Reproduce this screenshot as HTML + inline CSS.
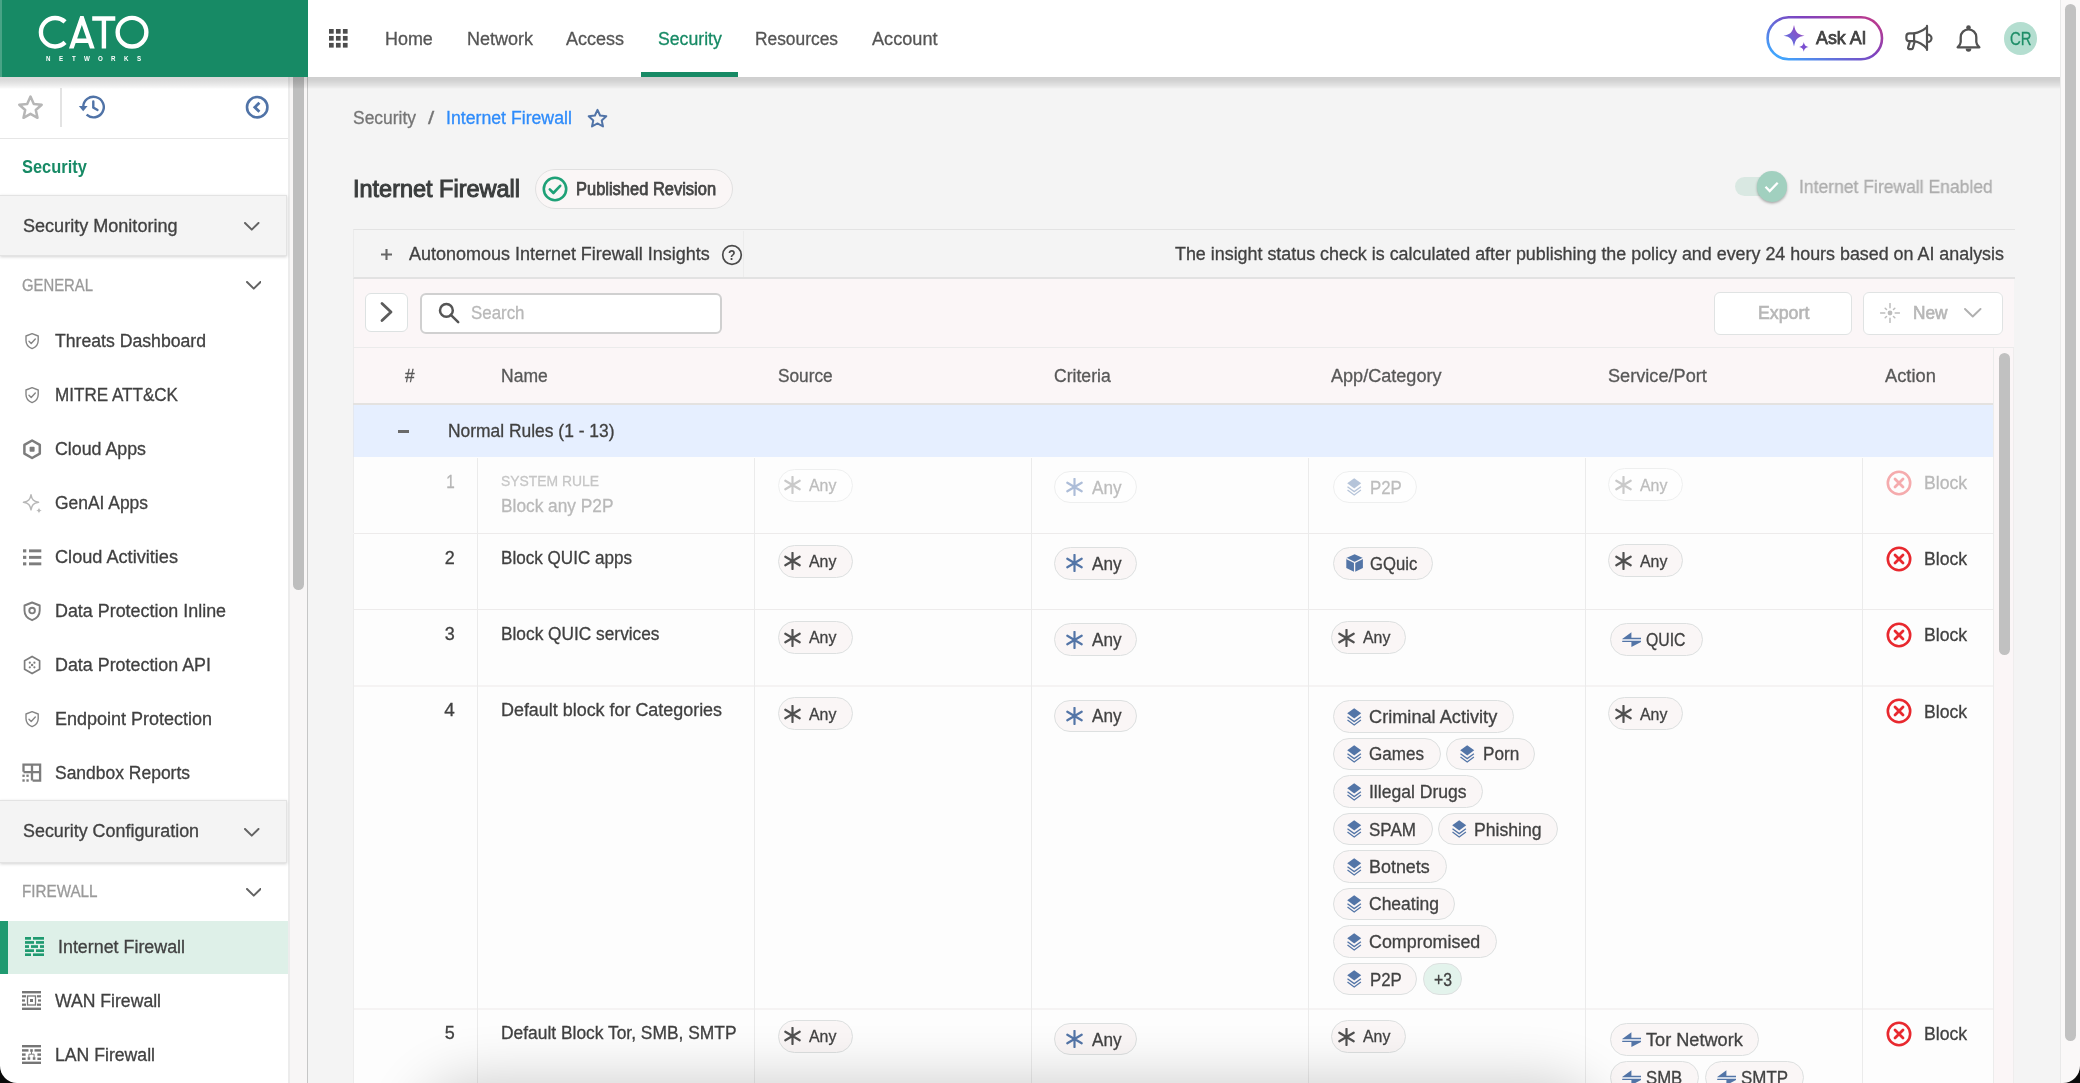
<!DOCTYPE html>
<html><head><meta charset="utf-8"><title>Internet Firewall</title>
<style>
html,body{margin:0;padding:0;}
body{width:2080px;height:1083px;overflow:hidden;position:relative;background:#f4f4f4;font-family:"Liberation Sans",sans-serif;}
#app{position:absolute;left:0;top:0;width:2080px;height:1083px;overflow:hidden;will-change:transform;}
.b{position:absolute;box-sizing:border-box;display:block;}
.t{position:absolute;white-space:nowrap;line-height:1;transform-origin:0 50%;font-family:"Liberation Sans",sans-serif;}
</style></head><body><div id="app">
<div class="b" style="left:0px;top:77px;width:288px;height:1006px;background:#fff;"></div>
<div class="b" style="left:288px;top:77px;width:20px;height:1006px;background:#f8f6f6;border-left:2px solid #ececec;border-right:1px solid #c6c6c6;"></div>
<div class="b" style="left:293px;top:60px;width:11px;height:530px;background:#bebebe;border-radius:6px;"></div>
<svg class="b" style="left:17px;top:94px;" width="27" height="27" viewBox="0 0 27 27"><path d="M13.5 2.6l3.3 7.3 7.9.8-5.9 5.3 1.7 7.8-7-4-7 4 1.7-7.8-5.9-5.3 7.9-.8z" fill="none" stroke="#b6b6b6" stroke-width="2.500" stroke-linejoin="round"/></svg>
<div class="b" style="left:60px;top:88px;width:2px;height:39px;background:#e3e3e3;"></div>
<svg class="b" style="left:77px;top:94.3px;" width="28" height="26" viewBox="0 0 28 26"><g fill="none" stroke="#5073a7" stroke-width="2.400"><path d="M6.200 13a10.300 10.300 0 1 1 3.400 7.700"/><path d="M16.3 7.5v6l4.2 2.5" stroke-linecap="round"/></g><path d="M1.800 12h8.800l-4.400 5.200z" fill="#5073a7"/></svg>
<svg class="b" style="left:245px;top:95px;" width="25" height="25" viewBox="0 0 25 25"><g fill="none" stroke="#5073a7" stroke-width="2.600"><circle cx="12.200" cy="12.200" r="10.200"/><path d="M14.400 7.800L9.800 12.300l4.600 4.500" stroke-width="2.800" stroke-linejoin="miter"/></g></svg>
<div class="b" style="left:0px;top:137.5px;width:288px;height:1.5px;background:#e6e6e6;"></div>
<span class="t" style="left:22.40px;top:159.00px;font-size:17.6px;color:#178a65;transform:scaleX(0.9334);font-weight:700;">Security</span>
<div class="b" style="left:0px;top:194.5px;width:287px;height:61px;background:#f4f4f4;border:1px solid #e3e3e3;border-left:none;box-shadow:0 1px 3px rgba(0,0,0,.18);"></div>
<span class="t" style="left:23.20px;top:218.00px;font-size:17.6px;color:#414141;transform:scaleX(1.0262);-webkit-text-stroke:0.3px #414141;">Security Monitoring</span>
<svg class="b" style="left:244.3px;top:221.8px;" width="15.5" height="9.6" viewBox="0 0 15.5 9.6"><path d="M1 1L7.75 7.6L14.5 1" fill="none" stroke="#636363" stroke-width="2" stroke-linecap="round" stroke-linejoin="round"/></svg>
<span class="t" style="left:22.40px;top:277.00px;font-size:16.25px;color:#9a9a9a;transform:scaleX(0.9141);-webkit-text-stroke:0.3px #9a9a9a;">GENERAL</span>
<svg class="b" style="left:245.6px;top:281.3px;" width="15.5" height="9.6" viewBox="0 0 15.5 9.6"><path d="M1 1L7.75 7.6L14.5 1" fill="none" stroke="#636363" stroke-width="2" stroke-linecap="round" stroke-linejoin="round"/></svg>
<span class="t" style="left:55.00px;top:333.00px;font-size:17.6px;color:#414141;transform:scaleX(1.0028);-webkit-text-stroke:0.3px #414141;">Threats Dashboard</span>
<svg class="b" style="left:21.5px;top:331px;" width="20" height="20" viewBox="0 0 20 20"><g fill="none" stroke="#858585" stroke-width="1.400" stroke-linejoin="round"><path d="M10.100 2.600l6.100 2.400v4.400c0 3.800-2.500 6.800-6.100 8.200-3.600-1.400-6.100-4.400-6.100-8.200V5z"/><path d="M7 10.300l2.200 2.200 4.100-4.400" stroke-linecap="round"/></g></svg>
<span class="t" style="left:55.00px;top:387.00px;font-size:17.6px;color:#414141;transform:scaleX(0.9704);-webkit-text-stroke:0.3px #414141;">MITRE ATT&amp;CK</span>
<svg class="b" style="left:21.5px;top:385px;" width="20" height="20" viewBox="0 0 20 20"><g fill="none" stroke="#858585" stroke-width="1.400" stroke-linejoin="round"><path d="M10.100 2.600l6.100 2.400v4.400c0 3.800-2.500 6.800-6.100 8.200-3.600-1.400-6.100-4.400-6.100-8.200V5z"/><path d="M7 10.300l2.200 2.200 4.100-4.400" stroke-linecap="round"/></g></svg>
<span class="t" style="left:55.00px;top:441.00px;font-size:17.6px;color:#414141;transform:scaleX(1.0115);-webkit-text-stroke:0.3px #414141;">Cloud Apps</span>
<svg class="b" style="left:21.5px;top:439px;" width="20" height="21" viewBox="0 0 20 21"><path d="M10.100 1.500l7.700 4.400v8.700l-7.700 4.400-7.700-4.400V5.900z" fill="none" stroke="#7d7d7d" stroke-width="2.500" stroke-linejoin="round"/><rect x="7.600" y="7.800" width="5" height="5" rx="0.800" fill="#7d7d7d"/></svg>
<span class="t" style="left:55.00px;top:495.00px;font-size:17.6px;color:#414141;transform:scaleX(0.9905);-webkit-text-stroke:0.3px #414141;">GenAI Apps</span>
<svg class="b" style="left:21.5px;top:493px;" width="22" height="22" viewBox="0 0 22 22"><path d="M9 1.800c.9 5 2.500 6.600 7.500 7.500-5 .9-6.600 2.500-7.500 7.500-.9-5-2.500-6.600-7.500-7.500 5-.9 6.600-2.500 7.500-7.500z" fill="none" stroke="#b7b7b7" stroke-width="1.500" stroke-linejoin="round"/><path d="M17 14.500c.4 2 1 2.600 3 3-2 .4-2.600 1-3 3-.4-2-1-2.600-3-3 2-.4 2.600-1 3-3z" fill="#b7b7b7"/></svg>
<span class="t" style="left:55.00px;top:549.00px;font-size:17.6px;color:#414141;transform:scaleX(1.0312);-webkit-text-stroke:0.3px #414141;">Cloud Activities</span>
<svg class="b" style="left:21.5px;top:547px;" width="20" height="20" viewBox="0 0 20 20"><g fill="#7d7d7d"><rect x="1" y="2.300" width="3.300" height="3.100"/><rect x="1" y="8.800" width="3.300" height="3.100"/><rect x="1" y="15.300" width="3.300" height="3.100"/><rect x="7" y="2.400" width="12.300" height="2.900"/><rect x="7" y="8.900" width="12.300" height="2.900"/><rect x="7" y="15.400" width="12.300" height="2.900"/></g></svg>
<span class="t" style="left:55.00px;top:603.00px;font-size:17.6px;color:#414141;transform:scaleX(1.0167);-webkit-text-stroke:0.3px #414141;">Data Protection Inline</span>
<svg class="b" style="left:21.5px;top:601px;" width="20" height="21" viewBox="0 0 20 21"><g fill="none" stroke="#7d7d7d" stroke-width="1.900" stroke-linejoin="round"><path d="M10.100 1.500l7.600 3v5c0 4.500-3.100 8.100-7.600 9.700-4.500-1.600-7.600-5.200-7.600-9.700v-5z"/><circle cx="10.100" cy="9.600" r="2.800"/></g></svg>
<span class="t" style="left:55.00px;top:657.00px;font-size:17.6px;color:#414141;transform:scaleX(1.0161);-webkit-text-stroke:0.3px #414141;">Data Protection API</span>
<svg class="b" style="left:21.5px;top:655px;" width="20" height="21" viewBox="0 0 20 21"><path d="M10.100 1.400l7.500 4.300v8.600l-7.500 4.300-7.500-4.300V5.700z" fill="none" stroke="#7d7d7d" stroke-width="1.700" stroke-linejoin="round"/><g fill="#7d7d7d"><circle cx="7.800" cy="7.700" r="1.100"/><circle cx="12.400" cy="7.700" r="1.100"/><circle cx="10.100" cy="10" r="1.200"/><circle cx="7.800" cy="12.300" r="1.100"/><circle cx="12.400" cy="12.300" r="1.100"/></g></svg>
<span class="t" style="left:55.00px;top:711.00px;font-size:17.6px;color:#414141;transform:scaleX(1.0226);-webkit-text-stroke:0.3px #414141;">Endpoint Protection</span>
<svg class="b" style="left:21.5px;top:709px;" width="20" height="20" viewBox="0 0 20 20"><g fill="none" stroke="#858585" stroke-width="1.400" stroke-linejoin="round"><path d="M10.100 2.600l6.100 2.400v4.400c0 3.800-2.500 6.800-6.100 8.200-3.600-1.400-6.100-4.400-6.100-8.200V5z"/><path d="M7 10.300l2.200 2.200 4.100-4.400" stroke-linecap="round"/></g></svg>
<span class="t" style="left:55.00px;top:765.00px;font-size:17.6px;color:#414141;transform:scaleX(0.9932);-webkit-text-stroke:0.3px #414141;">Sandbox Reports</span>
<svg class="b" style="left:21.5px;top:761.7px;" width="20" height="21" viewBox="0 0 20 21"><g fill="none" stroke="#7d7d7d" stroke-width="2.300"><path d="M1.500 9.800V2.600h16.600v16H10.600"/><path d="M10 2.600v16M1.500 10.200h16.600"/></g><g fill="#7d7d7d"><rect x="0.400" y="12.600" width="2.300" height="2.300"/><rect x="4.400" y="12.600" width="2.300" height="2.300"/><rect x="0.400" y="17.300" width="2.300" height="2.400"/><rect x="4.400" y="17.300" width="2.300" height="2.400"/></g></svg>
<div class="b" style="left:0px;top:800px;width:287px;height:62.5px;background:#f4f4f4;border:1px solid #e3e3e3;border-left:none;box-shadow:0 1px 3px rgba(0,0,0,.18);"></div>
<span class="t" style="left:23.20px;top:823.00px;font-size:17.6px;color:#414141;transform:scaleX(1.0170);-webkit-text-stroke:0.3px #414141;">Security Configuration</span>
<svg class="b" style="left:244.3px;top:827.8px;" width="15.5" height="9.6" viewBox="0 0 15.5 9.6"><path d="M1 1L7.75 7.6L14.5 1" fill="none" stroke="#636363" stroke-width="2" stroke-linecap="round" stroke-linejoin="round"/></svg>
<span class="t" style="left:22.40px;top:883.00px;font-size:16.25px;color:#9a9a9a;transform:scaleX(0.9361);-webkit-text-stroke:0.3px #9a9a9a;">FIREWALL</span>
<svg class="b" style="left:245.6px;top:887.8px;" width="15.5" height="9.6" viewBox="0 0 15.5 9.6"><path d="M1 1L7.75 7.6L14.5 1" fill="none" stroke="#636363" stroke-width="2" stroke-linecap="round" stroke-linejoin="round"/></svg>
<div class="b" style="left:0px;top:920.7px;width:288px;height:53.6px;background:#def0e8;border-left:8px solid #1f9a70;"></div>
<span class="t" style="left:58.00px;top:939.00px;font-size:17.6px;color:#414141;transform:scaleX(1.0149);-webkit-text-stroke:0.3px #414141;">Internet Firewall</span>
<span class="t" style="left:55.00px;top:993.00px;font-size:17.6px;color:#414141;transform:scaleX(1.0012);-webkit-text-stroke:0.3px #414141;">WAN Firewall</span>
<span class="t" style="left:55.00px;top:1047.00px;font-size:17.6px;color:#414141;transform:scaleX(1.0030);-webkit-text-stroke:0.3px #414141;">LAN Firewall</span>
<svg class="b" style="left:24.8px;top:937.2px;" width="19" height="19" viewBox="0 0 19 19"><g fill="#1f9a70"><rect x="0" y="0.0" width="6" height="2.700"/><rect x="8" y="0.0" width="11" height="2.700"/><rect x="0" y="4.1" width="9" height="2.700"/><rect x="11" y="4.1" width="8" height="2.700"/><rect x="0" y="8.2" width="4" height="2.700"/><rect x="6" y="8.2" width="7" height="2.700"/><rect x="15" y="8.2" width="4" height="2.700"/><rect x="0" y="12.299999999999999" width="9" height="2.700"/><rect x="11" y="12.299999999999999" width="8" height="2.700"/><rect x="0" y="16.4" width="6" height="2.700"/><rect x="8" y="16.4" width="11" height="2.700"/></g></svg>
<svg class="b" style="left:21.8px;top:991.3px;" width="19" height="19" viewBox="0 0 19 19"><g fill="#757575"><rect x="0" y="0" width="19" height="2.400"/><rect x="0" y="16.600" width="19" height="2.400"/><rect x="0" y="4.200" width="4" height="2.200"/><rect x="15" y="4.200" width="4" height="2.200"/><rect x="0" y="8.400" width="3" height="2.200"/><rect x="16" y="8.400" width="3" height="2.200"/><rect x="0" y="12.600" width="4" height="2.200"/><rect x="15" y="12.600" width="4" height="2.200"/><rect x="5.500" y="5" width="8" height="9" fill="none" stroke="#757575" stroke-width="1.300"/><rect x="8" y="8" width="3" height="3"/></g></svg>
<svg class="b" style="left:21.8px;top:1045px;" width="19" height="19" viewBox="0 0 19 19"><g fill="#757575"><rect x="0" y="0" width="19" height="2.400"/><rect x="0" y="16.600" width="19" height="2.400"/><rect x="0" y="4.200" width="6.500" height="2.400"/><rect x="12.500" y="4.200" width="6.500" height="2.400"/><rect x="0" y="8.400" width="3.600" height="2.400"/><rect x="15.400" y="8.400" width="3.600" height="2.400"/><rect x="0" y="12.600" width="3.600" height="2.400"/><rect x="15.400" y="12.600" width="3.600" height="2.400"/><rect x="8.200" y="4.200" width="2.600" height="2.600"/><rect x="5.600" y="12.200" width="2.600" height="2.600"/><rect x="10.800" y="12.200" width="2.600" height="2.600"/><path d="M9.500 6.500v2.500M6.900 12.200v-3h5.200v3" fill="none" stroke="#757575" stroke-width="0.900"/></g></svg>
<span class="t" style="left:352.50px;top:110.00px;font-size:17.6px;color:#757575;transform:scaleX(0.9914);-webkit-text-stroke:0.3px #757575;">Security</span>
<span class="t" style="left:428.00px;top:110.00px;font-size:17.6px;color:#757575;transform:scaleX(1.2677);-webkit-text-stroke:0.3px #757575;">/</span>
<span class="t" style="left:446.20px;top:110.00px;font-size:17.6px;color:#2e8bfa;transform:scaleX(1.0053);-webkit-text-stroke:0.3px #2e8bfa;">Internet Firewall</span>
<svg class="b" style="left:587px;top:107.5px;" width="21" height="21" viewBox="0 0 21 21"><path d="M10.500 1.800l2.600 5.700 6.200.7-4.600 4.200 1.300 6.100-5.500-3.100-5.500 3.100 1.300-6.100-4.600-4.200 6.200-.7z" fill="none" stroke="#5073a7" stroke-width="2" stroke-linejoin="round"/></svg>
<span class="t" style="left:353.00px;top:177.00px;font-size:24.4px;color:#3a3d3d;transform:scaleX(0.9624);-webkit-text-stroke:1.05px #3a3d3d;">Internet Firewall</span>
<div class="b" style="left:535px;top:168.8px;width:197.5px;height:40.7px;background:#faf6f6;border:1px solid #e0e0e0;border-radius:21px;"></div>
<svg class="b" style="left:542px;top:176px;" width="26" height="26" viewBox="0 0 26 26"><g fill="none" stroke="#1fa177" stroke-width="2.600"><circle cx="13" cy="13" r="11.200"/><path d="M7.800 13.400l3.600 3.600 6.800-7.200" stroke-linecap="round" stroke-linejoin="round"/></g></svg>
<span class="t" style="left:576.00px;top:181.00px;font-size:17.6px;color:#454545;transform:scaleX(0.9359);-webkit-text-stroke:0.75px #454545;">Published Revision</span>
<div class="b" style="left:1735px;top:177px;width:40px;height:18.5px;background:#d9e8e2;border-radius:10px;"></div>
<div class="b" style="left:1756.5px;top:171.3px;width:30.5px;height:30.5px;background:#a1d0bf;border-radius:50%;box-shadow:0 1.500px 2.500px rgba(0,0,0,.3);"></div>
<svg class="b" style="left:1763px;top:179px;" width="18" height="15" viewBox="0 0 18 15"><path d="M2.500 7.800l4.200 4.200 8-8.200" fill="none" stroke="#fff" stroke-width="2.300"/></svg>
<span class="t" style="left:1798.80px;top:178.00px;font-size:18.2px;color:#adadad;transform:scaleX(0.9631);-webkit-text-stroke:0.3px #adadad;">Internet Firewall Enabled</span>
<div class="b" style="left:352.5px;top:229px;width:1662.5px;height:50px;border-top:1.300px solid #e3e3e3;border-bottom:2.300px solid #e2e2e2;border-left:1px solid #ebebeb;"></div>
<div class="b" style="left:742.5px;top:231px;width:1px;height:46px;background:#ececec;"></div>
<svg class="b" style="left:380px;top:248px;" width="13" height="13" viewBox="0 0 13 13"><path d="M6.500 1v11M1 6.500h11" stroke="#666" stroke-width="2.100" fill="none"/></svg>
<span class="t" style="left:408.80px;top:246.00px;font-size:17.6px;color:#414141;transform:scaleX(1.0217);-webkit-text-stroke:0.3px #414141;">Autonomous Internet Firewall Insights</span>
<svg class="b" style="left:721px;top:243.5px;" width="22" height="22" viewBox="0 0 22 22"><circle cx="11" cy="11" r="9.300" fill="none" stroke="#4a4a4a" stroke-width="1.700"/></svg>
<span class="t" style="left:727.60px;top:248.00px;font-size:14.5px;color:#4a4a4a;transform:scaleX(0.8578);font-weight:700;">?</span>
<span class="t" style="left:1175.00px;top:246.00px;font-size:17.6px;color:#414141;transform:scaleX(1.0163);-webkit-text-stroke:0.3px #414141;">The insight status check is calculated after publishing the policy and every 24 hours based on AI analysis</span>
<div class="b" style="left:353px;top:279px;width:1661px;height:126px;background:#fbf6f7;border-left:1px solid #ececec;"></div>
<div class="b" style="left:353px;top:347px;width:1661px;height:1.3px;background:#ebebeb;"></div>
<div class="b" style="left:365px;top:293.3px;width:43px;height:38.5px;background:#fff;border:1.500px solid #dde2e2;border-radius:6px;"></div>
<svg class="b" style="left:379px;top:301.3px;" width="16" height="22" viewBox="0 0 16 22"><path d="M3 2.500l9 8.500-9 8.500" fill="none" stroke="#5c5c5c" stroke-width="2.800" stroke-linecap="round" stroke-linejoin="round"/></svg>
<div class="b" style="left:420px;top:293px;width:302px;height:41px;background:#fff;border:2px solid #d0d0d0;border-radius:6px;"></div>
<svg class="b" style="left:438px;top:302px;" width="23" height="23" viewBox="0 0 23 23"><g fill="none" stroke="#555" stroke-width="2.500"><circle cx="8.400" cy="8.400" r="6.400"/><path d="M12.800 12.800l7.400 7.400" stroke-linecap="round"/></g></svg>
<span class="t" style="left:471.00px;top:304.00px;font-size:18.2px;color:#b8b8b8;transform:scaleX(0.9287);-webkit-text-stroke:0.3px #b8b8b8;">Search</span>
<div class="b" style="left:1714px;top:291.5px;width:137.5px;height:43.2px;background:#fff;border:1.300px solid #e0e3e3;border-radius:6px;"></div>
<span class="t" style="left:1757.50px;top:304.00px;font-size:18.2px;color:#b7b7b7;transform:scaleX(0.9763);-webkit-text-stroke:0.65px #b7b7b7;">Export</span>
<div class="b" style="left:1863px;top:291.5px;width:139.5px;height:43.2px;background:#fff;border:1.300px solid #e0e3e3;border-radius:6px;"></div>
<svg class="b" style="left:1880px;top:303px;" width="20" height="20" viewBox="0 0 20 20"><g stroke="#bdbdbd" stroke-width="1.500" stroke-linecap="round" fill="none"><path d="M10 0.500v4.300M10 15.200v4.300M0.500 10h4.300M15.200 10h4.300M5.200 5.200l1.300 1.300M14.800 5.200l-1.300 1.300M5.200 14.800l1.300-1.300M14.800 14.800l-1.300-1.300"/></g><circle cx="10" cy="10" r="2.400" fill="#bdbdbd"/></svg>
<span class="t" style="left:1913.00px;top:304.00px;font-size:18.2px;color:#b7b7b7;transform:scaleX(0.9480);-webkit-text-stroke:0.65px #b7b7b7;">New</span>
<svg class="b" style="left:1964px;top:308px;" width="17.5" height="10.5" viewBox="0 0 17.5 10.5"><path d="M1 1L8.75 8.5L16.5 1" fill="none" stroke="#b0b0b0" stroke-width="1.9" stroke-linecap="round" stroke-linejoin="round"/></svg>
<span class="t" style="left:404.50px;top:368.00px;font-size:17.6px;color:#585858;transform:scaleX(0.9712);-webkit-text-stroke:0.3px #585858;">#</span>
<span class="t" style="left:500.80px;top:368.00px;font-size:17.6px;color:#585858;transform:scaleX(0.9953);-webkit-text-stroke:0.3px #585858;">Name</span>
<span class="t" style="left:777.50px;top:368.00px;font-size:17.6px;color:#585858;transform:scaleX(0.9814);-webkit-text-stroke:0.3px #585858;">Source</span>
<span class="t" style="left:1054.30px;top:368.00px;font-size:17.6px;color:#585858;transform:scaleX(1.0002);-webkit-text-stroke:0.3px #585858;">Criteria</span>
<span class="t" style="left:1331.30px;top:368.00px;font-size:17.6px;color:#585858;transform:scaleX(1.0273);-webkit-text-stroke:0.3px #585858;">App/Category</span>
<span class="t" style="left:1608.00px;top:368.00px;font-size:17.6px;color:#585858;transform:scaleX(1.0312);-webkit-text-stroke:0.3px #585858;">Service/Port</span>
<span class="t" style="left:1885.00px;top:368.00px;font-size:17.6px;color:#585858;transform:scaleX(1.0391);-webkit-text-stroke:0.3px #585858;">Action</span>
<div class="b" style="left:353px;top:403px;width:1640px;height:2px;background:#e4e2e0;"></div>
<div class="b" style="left:1993px;top:348px;width:21px;height:735px;background:#fbf6f7;border-left:1px solid #ececec;"></div>
<div class="b" style="left:2013px;top:348px;width:1px;height:735px;background:#efeded;"></div>
<div class="b" style="left:1999px;top:353px;width:11px;height:302px;background:#c1c1c1;border-radius:6px;"></div>
<div class="b" style="left:353px;top:405px;width:1640px;height:53px;background:#e6efff;border-left:1px solid #e4e8f0;"></div>
<div class="b" style="left:397.5px;top:429.5px;width:11.3px;height:3px;background:#6a6a6a;"></div>
<span class="t" style="left:447.50px;top:422.00px;font-size:18.2px;color:#414141;transform:scaleX(0.9578);-webkit-text-stroke:0.3px #414141;">Normal Rules (1 - 13)</span>
<div class="b" style="left:353px;top:457.4px;width:1640px;height:76.10000000000002px;background:#fdfdfd;border-left:1px solid #ececec;"></div>
<div class="b" style="left:353px;top:533.5px;width:1640px;height:76.29999999999995px;background:#fdfdfd;border-left:1px solid #ececec;"></div>
<div class="b" style="left:353px;top:609.8px;width:1640px;height:76.20000000000005px;background:#fdfdfd;border-left:1px solid #ececec;"></div>
<div class="b" style="left:353px;top:686px;width:1640px;height:322.70000000000005px;background:#fdfdfd;border-left:1px solid #ececec;"></div>
<div class="b" style="left:353px;top:1008.7px;width:1640px;height:91.29999999999995px;background:#fdfdfd;border-left:1px solid #ececec;"></div>
<div class="b" style="left:354px;top:533px;width:1639px;height:1px;background:#edebeb;"></div>
<div class="b" style="left:354px;top:609px;width:1639px;height:1px;background:#edebeb;"></div>
<div class="b" style="left:354px;top:685px;width:1639px;height:2px;background:#f5f3f3;"></div>
<div class="b" style="left:354px;top:1008px;width:1639px;height:2px;background:#f5f3f3;"></div>
<div class="b" style="left:477px;top:458px;width:1px;height:640px;background:#ebebeb;"></div>
<div class="b" style="left:754px;top:458px;width:1px;height:640px;background:#ebebeb;"></div>
<div class="b" style="left:1031px;top:458px;width:1px;height:640px;background:#ebebeb;"></div>
<div class="b" style="left:1308px;top:458px;width:1px;height:640px;background:#ebebeb;"></div>
<div class="b" style="left:1585px;top:458px;width:1px;height:640px;background:#ebebeb;"></div>
<div class="b" style="left:1862px;top:458px;width:1px;height:640px;background:#ebebeb;"></div>
<span class="t" style="left:444.72px;top:474.00px;font-size:17.6px;color:#b5b5b5;transform:scaleX(0.8690);transform-origin:100% 50%;-webkit-text-stroke:0.3px #b5b5b5;">1</span>
<span class="t" style="left:500.80px;top:474.00px;font-size:14.9px;color:#c6c6c6;transform:scaleX(0.9324);-webkit-text-stroke:0.3px #c6c6c6;">SYSTEM RULE</span>
<span class="t" style="left:500.80px;top:498.00px;font-size:17.6px;color:#b9b9b9;transform:scaleX(0.9833);-webkit-text-stroke:0.3px #b9b9b9;">Block any P2P</span>
<div class="b" style="left:777.5px;top:468.59999999999997px;width:75.3px;height:33px;background:#fefefe;border:1.200px solid #eeefef;border-radius:17px;"></div>
<svg class="b" style="left:784.0px;top:476.09999999999997px;" width="17" height="18" viewBox="0 0 17 18"><path d="M8.500 0.900v16.200M1.300 4.700l14.400 8.600M1.300 13.300l14.400-8.600" stroke="#c9c9c9" stroke-width="2.200" stroke-linecap="round" fill="none"/></svg>
<span class="t" style="left:809.00px;top:477.00px;font-size:16.25px;color:#bdbdbd;transform:scaleX(0.9786);-webkit-text-stroke:0.3px #bdbdbd;">Any</span>
<div class="b" style="left:1054px;top:470.79999999999995px;width:83px;height:32.7px;background:#fefefe;border:1.200px solid #eeefef;border-radius:16.500px;"></div>
<svg class="b" style="left:1066.1px;top:477.99999999999994px;" width="17" height="18" viewBox="0 0 17 18"><path d="M8.500 0.900v16.200M1.300 4.700l14.400 8.600M1.300 13.300l14.400-8.600" stroke="#adbdd8" stroke-width="2.200" stroke-linecap="round" fill="none"/></svg>
<span class="t" style="left:1091.75px;top:480.00px;font-size:17.6px;color:#bdbdbd;transform:scaleX(0.9732);-webkit-text-stroke:0.3px #bdbdbd;">Any</span>
<div class="b" style="left:1333.2px;top:470.79999999999995px;width:84.3px;height:32.7px;background:#fefefe;border:1.200px solid #eeefef;border-radius:16.500px;"></div>
<svg class="b" style="left:1347.0px;top:478.29999999999995px;" width="14.5" height="18.5" viewBox="0 0 14.5 18.5"><g opacity="0.42"><path d="M7.200 0.200L14.200 5.300 7.200 10.400 0.200 5.300z" fill="#5375a7"/><path d="M0.500 8.700L7.200 13.600 13.900 8.700M0.500 12L7.200 16.900 13.900 12" fill="none" stroke="#5375a7" stroke-width="1.300"/></g></svg>
<span class="t" style="left:1369.50px;top:480.00px;font-size:17.6px;color:#bdbdbd;transform:scaleX(0.9564);-webkit-text-stroke:0.3px #bdbdbd;">P2P</span>
<div class="b" style="left:1608.2px;top:468.4px;width:75.3px;height:33px;background:#fefefe;border:1.200px solid #eeefef;border-radius:17px;"></div>
<svg class="b" style="left:1614.7px;top:475.9px;" width="17" height="18" viewBox="0 0 17 18"><path d="M8.500 0.900v16.200M1.300 4.700l14.400 8.600M1.300 13.300l14.400-8.600" stroke="#c9c9c9" stroke-width="2.200" stroke-linecap="round" fill="none"/></svg>
<span class="t" style="left:1639.70px;top:477.00px;font-size:16.25px;color:#bdbdbd;transform:scaleX(0.9786);-webkit-text-stroke:0.3px #bdbdbd;">Any</span>
<svg class="b" style="left:1885.6px;top:469.5px;" width="26" height="26" viewBox="0 0 26 26"><g fill="none" stroke="#f5abad" stroke-width="2.600"><circle cx="13" cy="13" r="11.200"/><path d="M9 9l8 8M17 9l-8 8" stroke-width="2.800" stroke-linecap="round"/></g></svg>
<span class="t" style="left:1923.80px;top:475.00px;font-size:17.6px;color:#b9b9b9;transform:scaleX(1.0043);-webkit-text-stroke:0.3px #b9b9b9;">Block</span>
<span class="t" style="left:444.72px;top:550.00px;font-size:17.6px;color:#414141;transform:scaleX(1.0224);transform-origin:100% 50%;-webkit-text-stroke:0.3px #414141;">2</span>
<span class="t" style="left:500.80px;top:550.00px;font-size:17.6px;color:#414141;transform:scaleX(0.9709);-webkit-text-stroke:0.3px #414141;">Block QUIC apps</span>
<div class="b" style="left:777.5px;top:544.7px;width:75.3px;height:33px;background:#faf6f6;border:1.200px solid #dde0e0;border-radius:17px;"></div>
<svg class="b" style="left:784.0px;top:552.2px;" width="17" height="18" viewBox="0 0 17 18"><path d="M8.500 0.900v16.200M1.300 4.700l14.400 8.600M1.300 13.300l14.400-8.600" stroke="#505050" stroke-width="2.200" stroke-linecap="round" fill="none"/></svg>
<span class="t" style="left:809.00px;top:553.00px;font-size:16.25px;color:#424242;transform:scaleX(0.9786);-webkit-text-stroke:0.3px #424242;">Any</span>
<div class="b" style="left:1054px;top:547.0px;width:83px;height:32.7px;background:#faf6f6;border:1.200px solid #dde0e0;border-radius:16.500px;"></div>
<svg class="b" style="left:1066.1px;top:554.2px;" width="17" height="18" viewBox="0 0 17 18"><path d="M8.500 0.900v16.200M1.300 4.700l14.400 8.600M1.300 13.300l14.400-8.600" stroke="#5375a7" stroke-width="2.200" stroke-linecap="round" fill="none"/></svg>
<span class="t" style="left:1091.75px;top:556.00px;font-size:17.6px;color:#424242;transform:scaleX(0.9732);-webkit-text-stroke:0.3px #424242;">Any</span>
<div class="b" style="left:1333.2px;top:547.0px;width:100px;height:32.7px;background:#faf6f6;border:1.200px solid #dde0e0;border-radius:16.500px;"></div>
<svg class="b" style="left:1345.8px;top:554.2px;" width="17.5" height="18.5" viewBox="0 0 17.5 18.5"><path d="M8.600 0.200L16.900 4.100v9.800L8.600 18.100 0.300 13.900V4.100z" fill="#5375a7"/><path d="M0.300 4.400L8.600 8.600 16.900 4.400M8.600 8.600v9.600" fill="none" stroke="#faf6f6" stroke-width="1.300"/></svg>
<span class="t" style="left:1369.50px;top:556.00px;font-size:17.6px;color:#424242;transform:scaleX(0.9477);-webkit-text-stroke:0.3px #424242;">GQuic</span>
<div class="b" style="left:1608.2px;top:544.3000000000001px;width:75.3px;height:33px;background:#faf6f6;border:1.200px solid #dde0e0;border-radius:17px;"></div>
<svg class="b" style="left:1614.7px;top:551.8000000000001px;" width="17" height="18" viewBox="0 0 17 18"><path d="M8.500 0.900v16.200M1.300 4.700l14.400 8.600M1.300 13.300l14.400-8.600" stroke="#505050" stroke-width="2.200" stroke-linecap="round" fill="none"/></svg>
<span class="t" style="left:1639.70px;top:553.00px;font-size:16.25px;color:#424242;transform:scaleX(0.9786);-webkit-text-stroke:0.3px #424242;">Any</span>
<svg class="b" style="left:1885.6px;top:545.6px;" width="26" height="26" viewBox="0 0 26 26"><g fill="none" stroke="#e8282e" stroke-width="2.600"><circle cx="13" cy="13" r="11.200"/><path d="M9 9l8 8M17 9l-8 8" stroke-width="2.800" stroke-linecap="round"/></g></svg>
<span class="t" style="left:1923.80px;top:551.00px;font-size:17.6px;color:#424242;transform:scaleX(1.0043);-webkit-text-stroke:0.3px #424242;">Block</span>
<span class="t" style="left:444.72px;top:626.00px;font-size:17.6px;color:#414141;transform:scaleX(1.0224);transform-origin:100% 50%;-webkit-text-stroke:0.3px #414141;">3</span>
<span class="t" style="left:500.80px;top:626.00px;font-size:17.6px;color:#414141;transform:scaleX(0.9827);-webkit-text-stroke:0.3px #414141;">Block QUIC services</span>
<div class="b" style="left:777.5px;top:621.0px;width:75.3px;height:33px;background:#faf6f6;border:1.200px solid #dde0e0;border-radius:17px;"></div>
<svg class="b" style="left:784.0px;top:628.5px;" width="17" height="18" viewBox="0 0 17 18"><path d="M8.500 0.900v16.200M1.300 4.700l14.400 8.600M1.300 13.300l14.400-8.600" stroke="#505050" stroke-width="2.200" stroke-linecap="round" fill="none"/></svg>
<span class="t" style="left:809.00px;top:629.00px;font-size:16.25px;color:#424242;transform:scaleX(0.9786);-webkit-text-stroke:0.3px #424242;">Any</span>
<div class="b" style="left:1054px;top:623.3px;width:83px;height:32.7px;background:#faf6f6;border:1.200px solid #dde0e0;border-radius:16.500px;"></div>
<svg class="b" style="left:1066.1px;top:630.5px;" width="17" height="18" viewBox="0 0 17 18"><path d="M8.500 0.900v16.200M1.300 4.700l14.400 8.600M1.300 13.300l14.400-8.600" stroke="#5375a7" stroke-width="2.200" stroke-linecap="round" fill="none"/></svg>
<span class="t" style="left:1091.75px;top:632.00px;font-size:17.6px;color:#424242;transform:scaleX(0.9732);-webkit-text-stroke:0.3px #424242;">Any</span>
<div class="b" style="left:1331px;top:621.0px;width:75.3px;height:33px;background:#faf6f6;border:1.200px solid #dde0e0;border-radius:17px;"></div>
<svg class="b" style="left:1337.5px;top:628.5px;" width="17" height="18" viewBox="0 0 17 18"><path d="M8.500 0.900v16.200M1.300 4.700l14.400 8.600M1.300 13.300l14.400-8.600" stroke="#505050" stroke-width="2.200" stroke-linecap="round" fill="none"/></svg>
<span class="t" style="left:1362.50px;top:629.00px;font-size:16.25px;color:#424242;transform:scaleX(0.9786);-webkit-text-stroke:0.3px #424242;">Any</span>
<div class="b" style="left:1610px;top:623.3px;width:92.5px;height:32.7px;background:#faf6f6;border:1.200px solid #dde0e0;border-radius:16.500px;"></div>
<svg class="b" style="left:1622px;top:632.3px;" width="19.5" height="15.5" viewBox="0 0 19.5 15.5"><rect x="0.300" y="6.800" width="18.700" height="2.200" fill="#ccd6e6"/><path d="M0.200 6.900L9.400 0.200V5.700H19V6.900z" fill="#5375a7"/><path d="M0.200 8.900H19V10.100L9.400 15V10.100H0.200z" fill="#5375a7"/></svg>
<span class="t" style="left:1646.25px;top:632.00px;font-size:17.6px;color:#424242;transform:scaleX(0.8980);-webkit-text-stroke:0.3px #424242;">QUIC</span>
<svg class="b" style="left:1885.6px;top:621.9px;" width="26" height="26" viewBox="0 0 26 26"><g fill="none" stroke="#e8282e" stroke-width="2.600"><circle cx="13" cy="13" r="11.200"/><path d="M9 9l8 8M17 9l-8 8" stroke-width="2.800" stroke-linecap="round"/></g></svg>
<span class="t" style="left:1923.80px;top:627.00px;font-size:17.6px;color:#424242;transform:scaleX(1.0043);-webkit-text-stroke:0.3px #424242;">Block</span>
<span class="t" style="left:444.72px;top:702.00px;font-size:17.6px;color:#414141;transform:scaleX(1.0735);transform-origin:100% 50%;-webkit-text-stroke:0.3px #414141;">4</span>
<span class="t" style="left:500.80px;top:702.00px;font-size:17.6px;color:#414141;transform:scaleX(1.0181);-webkit-text-stroke:0.3px #414141;">Default block for Categories</span>
<div class="b" style="left:777.5px;top:697.2px;width:75.3px;height:33px;background:#faf6f6;border:1.200px solid #dde0e0;border-radius:17px;"></div>
<svg class="b" style="left:784.0px;top:704.7px;" width="17" height="18" viewBox="0 0 17 18"><path d="M8.500 0.900v16.200M1.300 4.700l14.400 8.600M1.300 13.300l14.400-8.600" stroke="#505050" stroke-width="2.200" stroke-linecap="round" fill="none"/></svg>
<span class="t" style="left:809.00px;top:706.00px;font-size:16.25px;color:#424242;transform:scaleX(0.9786);-webkit-text-stroke:0.3px #424242;">Any</span>
<div class="b" style="left:1054px;top:699.5px;width:83px;height:32.7px;background:#faf6f6;border:1.200px solid #dde0e0;border-radius:16.500px;"></div>
<svg class="b" style="left:1066.1px;top:706.7px;" width="17" height="18" viewBox="0 0 17 18"><path d="M8.500 0.900v16.200M1.300 4.700l14.400 8.600M1.300 13.300l14.400-8.600" stroke="#5375a7" stroke-width="2.200" stroke-linecap="round" fill="none"/></svg>
<span class="t" style="left:1091.75px;top:708.00px;font-size:17.6px;color:#424242;transform:scaleX(0.9732);-webkit-text-stroke:0.3px #424242;">Any</span>
<div class="b" style="left:1333.2px;top:700px;width:181px;height:32.7px;background:#faf6f6;border:1.200px solid #dde0e0;border-radius:16.500px;"></div>
<svg class="b" style="left:1347.0px;top:707.5px;" width="14.5" height="18.5" viewBox="0 0 14.5 18.5"><g opacity="1"><path d="M7.200 0.200L14.200 5.300 7.200 10.400 0.200 5.300z" fill="#5375a7"/><path d="M0.500 8.700L7.200 13.600 13.900 8.700M0.500 12L7.200 16.900 13.900 12" fill="none" stroke="#5375a7" stroke-width="1.300"/></g></svg>
<span class="t" style="left:1369.20px;top:709.00px;font-size:17.6px;color:#424242;transform:scaleX(1.0331);-webkit-text-stroke:0.3px #424242;">Criminal Activity</span>
<div class="b" style="left:1333.2px;top:737.5px;width:108px;height:32.7px;background:#faf6f6;border:1.200px solid #dde0e0;border-radius:16.500px;"></div>
<svg class="b" style="left:1347.0px;top:745.0px;" width="14.5" height="18.5" viewBox="0 0 14.5 18.5"><g opacity="1"><path d="M7.200 0.200L14.200 5.300 7.200 10.400 0.200 5.300z" fill="#5375a7"/><path d="M0.500 8.700L7.200 13.600 13.900 8.700M0.500 12L7.200 16.900 13.900 12" fill="none" stroke="#5375a7" stroke-width="1.300"/></g></svg>
<span class="t" style="left:1369.20px;top:746.00px;font-size:17.6px;color:#424242;transform:scaleX(0.9700);-webkit-text-stroke:0.3px #424242;">Games</span>
<div class="b" style="left:1446.2px;top:737.5px;width:89.3px;height:32.7px;background:#faf6f6;border:1.200px solid #dde0e0;border-radius:16.500px;"></div>
<svg class="b" style="left:1460.0px;top:745.0px;" width="14.5" height="18.5" viewBox="0 0 14.5 18.5"><g opacity="1"><path d="M7.200 0.200L14.200 5.300 7.200 10.400 0.200 5.300z" fill="#5375a7"/><path d="M0.500 8.700L7.200 13.600 13.900 8.700M0.500 12L7.200 16.900 13.900 12" fill="none" stroke="#5375a7" stroke-width="1.300"/></g></svg>
<span class="t" style="left:1482.50px;top:746.00px;font-size:17.6px;color:#424242;transform:scaleX(0.9756);-webkit-text-stroke:0.3px #424242;">Porn</span>
<div class="b" style="left:1333.2px;top:775.0px;width:150px;height:32.7px;background:#faf6f6;border:1.200px solid #dde0e0;border-radius:16.500px;"></div>
<svg class="b" style="left:1347.0px;top:782.5px;" width="14.5" height="18.5" viewBox="0 0 14.5 18.5"><g opacity="1"><path d="M7.200 0.200L14.200 5.300 7.200 10.400 0.200 5.300z" fill="#5375a7"/><path d="M0.500 8.700L7.200 13.600 13.900 8.700M0.500 12L7.200 16.900 13.900 12" fill="none" stroke="#5375a7" stroke-width="1.300"/></g></svg>
<span class="t" style="left:1369.20px;top:784.00px;font-size:17.6px;color:#424242;transform:scaleX(0.9973);-webkit-text-stroke:0.3px #424242;">Illegal Drugs</span>
<div class="b" style="left:1333.2px;top:812.5px;width:99.8px;height:32.7px;background:#faf6f6;border:1.200px solid #dde0e0;border-radius:16.500px;"></div>
<svg class="b" style="left:1347.0px;top:820.0px;" width="14.5" height="18.5" viewBox="0 0 14.5 18.5"><g opacity="1"><path d="M7.200 0.200L14.200 5.300 7.200 10.400 0.200 5.300z" fill="#5375a7"/><path d="M0.500 8.700L7.200 13.600 13.900 8.700M0.500 12L7.200 16.900 13.900 12" fill="none" stroke="#5375a7" stroke-width="1.300"/></g></svg>
<span class="t" style="left:1369.20px;top:822.00px;font-size:17.6px;color:#424242;transform:scaleX(0.9681);-webkit-text-stroke:0.3px #424242;">SPAM</span>
<div class="b" style="left:1438.2px;top:812.5px;width:120px;height:32.7px;background:#faf6f6;border:1.200px solid #dde0e0;border-radius:16.500px;"></div>
<svg class="b" style="left:1452.0px;top:820.0px;" width="14.5" height="18.5" viewBox="0 0 14.5 18.5"><g opacity="1"><path d="M7.200 0.200L14.200 5.300 7.200 10.400 0.200 5.300z" fill="#5375a7"/><path d="M0.500 8.700L7.200 13.600 13.900 8.700M0.500 12L7.200 16.900 13.900 12" fill="none" stroke="#5375a7" stroke-width="1.300"/></g></svg>
<span class="t" style="left:1474.20px;top:822.00px;font-size:17.6px;color:#424242;transform:scaleX(1.0005);-webkit-text-stroke:0.3px #424242;">Phishing</span>
<div class="b" style="left:1333.2px;top:850.0px;width:113.5px;height:32.7px;background:#faf6f6;border:1.200px solid #dde0e0;border-radius:16.500px;"></div>
<svg class="b" style="left:1347.0px;top:857.5px;" width="14.5" height="18.5" viewBox="0 0 14.5 18.5"><g opacity="1"><path d="M7.200 0.200L14.200 5.300 7.200 10.400 0.200 5.300z" fill="#5375a7"/><path d="M0.500 8.700L7.200 13.600 13.900 8.700M0.500 12L7.200 16.900 13.900 12" fill="none" stroke="#5375a7" stroke-width="1.300"/></g></svg>
<span class="t" style="left:1369.20px;top:859.00px;font-size:17.6px;color:#424242;transform:scaleX(1.0183);-webkit-text-stroke:0.3px #424242;">Botnets</span>
<div class="b" style="left:1333.2px;top:887.5px;width:122.3px;height:32.7px;background:#faf6f6;border:1.200px solid #dde0e0;border-radius:16.500px;"></div>
<svg class="b" style="left:1347.0px;top:895.0px;" width="14.5" height="18.5" viewBox="0 0 14.5 18.5"><g opacity="1"><path d="M7.200 0.200L14.200 5.300 7.200 10.400 0.200 5.300z" fill="#5375a7"/><path d="M0.500 8.700L7.200 13.600 13.900 8.700M0.500 12L7.200 16.900 13.900 12" fill="none" stroke="#5375a7" stroke-width="1.300"/></g></svg>
<span class="t" style="left:1369.20px;top:896.00px;font-size:17.6px;color:#424242;transform:scaleX(0.9942);-webkit-text-stroke:0.3px #424242;">Cheating</span>
<div class="b" style="left:1333.2px;top:925.0px;width:164.3px;height:32.7px;background:#faf6f6;border:1.200px solid #dde0e0;border-radius:16.500px;"></div>
<svg class="b" style="left:1347.0px;top:932.5px;" width="14.5" height="18.5" viewBox="0 0 14.5 18.5"><g opacity="1"><path d="M7.200 0.200L14.200 5.300 7.200 10.400 0.200 5.300z" fill="#5375a7"/><path d="M0.500 8.700L7.200 13.600 13.900 8.700M0.500 12L7.200 16.900 13.900 12" fill="none" stroke="#5375a7" stroke-width="1.300"/></g></svg>
<span class="t" style="left:1369.20px;top:934.00px;font-size:17.6px;color:#424242;transform:scaleX(1.0161);-webkit-text-stroke:0.3px #424242;">Compromised</span>
<div class="b" style="left:1333.2px;top:962.5px;width:84.3px;height:32.7px;background:#faf6f6;border:1.200px solid #dde0e0;border-radius:16.500px;"></div>
<svg class="b" style="left:1347.0px;top:970.0px;" width="14.5" height="18.5" viewBox="0 0 14.5 18.5"><g opacity="1"><path d="M7.200 0.200L14.200 5.300 7.200 10.400 0.200 5.300z" fill="#5375a7"/><path d="M0.500 8.700L7.200 13.600 13.900 8.700M0.500 12L7.200 16.900 13.900 12" fill="none" stroke="#5375a7" stroke-width="1.300"/></g></svg>
<span class="t" style="left:1369.50px;top:972.00px;font-size:17.6px;color:#424242;transform:scaleX(0.9564);-webkit-text-stroke:0.3px #424242;">P2P</span>
<div class="b" style="left:1423px;top:962.5px;width:39.4px;height:32.7px;background:#e3f3ec;border:1.200px solid #dde0e0;border-radius:16.500px;"></div>
<span class="t" style="left:1433.90px;top:972.00px;font-size:17.6px;color:#424242;transform:scaleX(0.8972);-webkit-text-stroke:0.3px #424242;">+3</span>
<div class="b" style="left:1608.2px;top:697.2px;width:75.3px;height:33px;background:#faf6f6;border:1.200px solid #dde0e0;border-radius:17px;"></div>
<svg class="b" style="left:1614.7px;top:704.7px;" width="17" height="18" viewBox="0 0 17 18"><path d="M8.500 0.900v16.200M1.300 4.700l14.400 8.600M1.300 13.300l14.400-8.600" stroke="#505050" stroke-width="2.200" stroke-linecap="round" fill="none"/></svg>
<span class="t" style="left:1639.70px;top:706.00px;font-size:16.25px;color:#424242;transform:scaleX(0.9786);-webkit-text-stroke:0.3px #424242;">Any</span>
<svg class="b" style="left:1885.6px;top:698.1px;" width="26" height="26" viewBox="0 0 26 26"><g fill="none" stroke="#e8282e" stroke-width="2.600"><circle cx="13" cy="13" r="11.200"/><path d="M9 9l8 8M17 9l-8 8" stroke-width="2.800" stroke-linecap="round"/></g></svg>
<span class="t" style="left:1923.80px;top:704.00px;font-size:17.6px;color:#424242;transform:scaleX(1.0043);-webkit-text-stroke:0.3px #424242;">Block</span>
<span class="t" style="left:444.72px;top:1025.00px;font-size:17.6px;color:#414141;transform:scaleX(1.0224);transform-origin:100% 50%;-webkit-text-stroke:0.3px #414141;">5</span>
<span class="t" style="left:500.80px;top:1025.00px;font-size:17.6px;color:#414141;transform:scaleX(0.9885);-webkit-text-stroke:0.3px #414141;">Default Block Tor, SMB, SMTP</span>
<div class="b" style="left:777.5px;top:1019.9000000000001px;width:75.3px;height:33px;background:#faf6f6;border:1.200px solid #dde0e0;border-radius:17px;"></div>
<svg class="b" style="left:784.0px;top:1027.4px;" width="17" height="18" viewBox="0 0 17 18"><path d="M8.500 0.900v16.200M1.300 4.700l14.400 8.600M1.300 13.300l14.400-8.600" stroke="#505050" stroke-width="2.200" stroke-linecap="round" fill="none"/></svg>
<span class="t" style="left:809.00px;top:1028.00px;font-size:16.25px;color:#424242;transform:scaleX(0.9786);-webkit-text-stroke:0.3px #424242;">Any</span>
<div class="b" style="left:1054px;top:1022.5px;width:83px;height:32.7px;background:#faf6f6;border:1.200px solid #dde0e0;border-radius:16.500px;"></div>
<svg class="b" style="left:1066.1px;top:1029.7px;" width="17" height="18" viewBox="0 0 17 18"><path d="M8.500 0.900v16.200M1.300 4.700l14.400 8.600M1.300 13.300l14.400-8.600" stroke="#5375a7" stroke-width="2.200" stroke-linecap="round" fill="none"/></svg>
<span class="t" style="left:1091.75px;top:1032.00px;font-size:17.6px;color:#424242;transform:scaleX(0.9732);-webkit-text-stroke:0.3px #424242;">Any</span>
<div class="b" style="left:1331px;top:1020.2px;width:75.3px;height:33px;background:#faf6f6;border:1.200px solid #dde0e0;border-radius:17px;"></div>
<svg class="b" style="left:1337.5px;top:1027.7px;" width="17" height="18" viewBox="0 0 17 18"><path d="M8.500 0.900v16.200M1.300 4.700l14.400 8.600M1.300 13.300l14.400-8.600" stroke="#505050" stroke-width="2.200" stroke-linecap="round" fill="none"/></svg>
<span class="t" style="left:1362.50px;top:1028.00px;font-size:16.25px;color:#424242;transform:scaleX(0.9786);-webkit-text-stroke:0.3px #424242;">Any</span>
<div class="b" style="left:1610px;top:1023.0px;width:149px;height:32.7px;background:#faf6f6;border:1.200px solid #dde0e0;border-radius:16.500px;"></div>
<svg class="b" style="left:1622px;top:1032.0px;" width="19.5" height="15.5" viewBox="0 0 19.5 15.5"><rect x="0.300" y="6.800" width="18.700" height="2.200" fill="#ccd6e6"/><path d="M0.200 6.900L9.400 0.200V5.700H19V6.900z" fill="#5375a7"/><path d="M0.200 8.900H19V10.100L9.400 15V10.100H0.200z" fill="#5375a7"/></svg>
<span class="t" style="left:1646.25px;top:1032.00px;font-size:17.6px;color:#424242;transform:scaleX(1.0310);-webkit-text-stroke:0.3px #424242;">Tor Network</span>
<div class="b" style="left:1610px;top:1061.0px;width:88.75px;height:32.7px;background:#faf6f6;border:1.200px solid #dde0e0;border-radius:16.500px;"></div>
<svg class="b" style="left:1622px;top:1070.0px;" width="19.5" height="15.5" viewBox="0 0 19.5 15.5"><rect x="0.300" y="6.800" width="18.700" height="2.200" fill="#ccd6e6"/><path d="M0.200 6.900L9.400 0.200V5.700H19V6.900z" fill="#5375a7"/><path d="M0.200 8.900H19V10.100L9.400 15V10.100H0.200z" fill="#5375a7"/></svg>
<span class="t" style="left:1646.25px;top:1070.00px;font-size:17.6px;color:#424242;transform:scaleX(0.9508);-webkit-text-stroke:0.3px #424242;">SMB</span>
<div class="b" style="left:1705px;top:1061.0px;width:98.75px;height:32.7px;background:#faf6f6;border:1.200px solid #dde0e0;border-radius:16.500px;"></div>
<svg class="b" style="left:1717px;top:1070.0px;" width="19.5" height="15.5" viewBox="0 0 19.5 15.5"><rect x="0.300" y="6.800" width="18.700" height="2.200" fill="#ccd6e6"/><path d="M0.200 6.900L9.400 0.200V5.700H19V6.900z" fill="#5375a7"/><path d="M0.200 8.900H19V10.100L9.400 15V10.100H0.200z" fill="#5375a7"/></svg>
<span class="t" style="left:1740.50px;top:1070.00px;font-size:17.6px;color:#424242;transform:scaleX(0.9616);-webkit-text-stroke:0.3px #424242;">SMTP</span>
<svg class="b" style="left:1885.6px;top:1020.8000000000001px;" width="26" height="26" viewBox="0 0 26 26"><g fill="none" stroke="#e8282e" stroke-width="2.600"><circle cx="13" cy="13" r="11.200"/><path d="M9 9l8 8M17 9l-8 8" stroke-width="2.800" stroke-linecap="round"/></g></svg>
<span class="t" style="left:1923.80px;top:1026.00px;font-size:17.6px;color:#424242;transform:scaleX(1.0043);-webkit-text-stroke:0.3px #424242;">Block</span>
<div class="b" style="left:445px;top:1108px;width:1130px;height:60px;background:#ccc;border-radius:30px;box-shadow:0 0 58px 26px rgba(0,0,0,.2);"></div>
<div class="b" style="left:0px;top:77px;width:2060px;height:12px;background:linear-gradient(to bottom,rgba(0,0,0,.15) 0,rgba(0,0,0,.145) 22%,rgba(0,0,0,.115) 45%,rgba(0,0,0,.075) 68%,rgba(0,0,0,.038) 86%,rgba(0,0,0,0) 100%);"></div>
<div class="b" style="left:308px;top:0px;width:1752px;height:77px;background:#fff;"></div>
<div class="b" style="left:0px;top:0px;width:308px;height:77px;background:#178a65;"></div>
<div class="b" style="left:0px;top:0px;width:1.5px;height:77px;background:rgba(255,255,255,.22);"></div>
<svg class="b" style="left:0px;top:0px;" width="308" height="77" viewBox="0 0 308 77"><g fill="none" stroke="#fff" stroke-width="4.400">
<path d="M65.05 21.95A14.25 14.25 0 1 0 65.05 42.45"/>
<path d="M92.200 18.450h23.100M103.900 18.450v30.150"/>
<circle cx="132" cy="32.200" r="14.350"/></g>
<path fill="#fff" fill-rule="evenodd" d="M69 48.600L80.200 16h3.400L94.700 48.600h-4.700L88.100 43H75.600L73.700 48.600zM77.150 38.600h9.400L81.850 24.900z"/></svg>
<span class="t" style="left:46.02px;top:55.00px;font-size:7.2px;color:#fff;transform:scaleX(0.8600);font-weight:700;">N</span>
<span class="t" style="left:58.74px;top:55.00px;font-size:7.2px;color:#fff;transform:scaleX(0.8600);font-weight:700;">E</span>
<span class="t" style="left:72.01px;top:55.00px;font-size:7.2px;color:#fff;transform:scaleX(0.8600);font-weight:700;">T</span>
<span class="t" style="left:84.23px;top:55.00px;font-size:7.2px;color:#fff;transform:scaleX(0.8600);font-weight:700;">W</span>
<span class="t" style="left:98.19px;top:55.00px;font-size:7.2px;color:#fff;transform:scaleX(0.8600);font-weight:700;">O</span>
<span class="t" style="left:110.87px;top:55.00px;font-size:7.2px;color:#fff;transform:scaleX(0.8600);font-weight:700;">R</span>
<span class="t" style="left:123.67px;top:55.00px;font-size:7.2px;color:#fff;transform:scaleX(0.8600);font-weight:700;">K</span>
<span class="t" style="left:137.04px;top:55.00px;font-size:7.2px;color:#fff;transform:scaleX(0.8600);font-weight:700;">S</span>
<svg class="b" style="left:329.2px;top:29.1px;" width="19" height="19" viewBox="0 0 19 19"><rect x="0.00" y="0.00" width="4.700" height="4.700" fill="#4d4d4d"/><rect x="6.95" y="0.00" width="4.700" height="4.700" fill="#4d4d4d"/><rect x="13.90" y="0.00" width="4.700" height="4.700" fill="#4d4d4d"/><rect x="0.00" y="6.95" width="4.700" height="4.700" fill="#4d4d4d"/><rect x="6.95" y="6.95" width="4.700" height="4.700" fill="#4d4d4d"/><rect x="13.90" y="6.95" width="4.700" height="4.700" fill="#4d4d4d"/><rect x="0.00" y="13.90" width="4.700" height="4.700" fill="#4d4d4d"/><rect x="6.95" y="13.90" width="4.700" height="4.700" fill="#4d4d4d"/><rect x="13.90" y="13.90" width="4.700" height="4.700" fill="#4d4d4d"/></svg>
<span class="t" style="left:385.00px;top:30.00px;font-size:18px;color:#555;transform:scaleX(0.9952);-webkit-text-stroke:0.3px #555;">Home</span>
<span class="t" style="left:467.00px;top:30.00px;font-size:18px;color:#555;transform:scaleX(0.9995);-webkit-text-stroke:0.3px #555;">Network</span>
<span class="t" style="left:566.20px;top:30.00px;font-size:18px;color:#555;transform:scaleX(0.9997);-webkit-text-stroke:0.3px #555;">Access</span>
<span class="t" style="left:657.50px;top:30.00px;font-size:18px;color:#178a65;transform:scaleX(0.9811);-webkit-text-stroke:0.3px #178a65;">Security</span>
<span class="t" style="left:755.00px;top:30.00px;font-size:18px;color:#555;transform:scaleX(0.9644);-webkit-text-stroke:0.3px #555;">Resources</span>
<span class="t" style="left:871.50px;top:30.00px;font-size:18px;color:#555;transform:scaleX(1.0070);-webkit-text-stroke:0.3px #555;">Account</span>
<div class="b" style="left:641.2px;top:71.5px;width:96.8px;height:5.5px;background:#178a65;"></div>
<svg class="b" style="left:1764px;top:14px" width="122" height="48" viewBox="0 0 122 48"><defs><linearGradient id="ag" x1="0" y1="0.850" x2="1" y2="0.150"><stop offset="0" stop-color="#3fa9ff"/><stop offset="0.300" stop-color="#5f74de"/><stop offset="0.600" stop-color="#7d43c0"/><stop offset="1" stop-color="#bb3a8d"/></linearGradient><linearGradient id="sg" x1="0" y1="1" x2="1" y2="0"><stop offset="0" stop-color="#4f7be8"/><stop offset="1" stop-color="#a43db8"/></linearGradient></defs><rect x="3.600" y="3.300" width="114.400" height="42" rx="21" fill="#fff" stroke="url(#ag)" stroke-width="2.600"/><path d="M30 11c1.500 7.500 3.500 9.500 10.500 10.700-7 1.200-9 3.200-10.500 10.700-1.500-7.500-3.500-9.500-10.500-10.700 7-1.200 9-3.200 10.500-10.700z" fill="url(#sg)"/><path d="M39.800 28c.7 3.300 1.700 4.300 4.800 4.900-3.100.6-4.100 1.600-4.800 4.900-.7-3.300-1.700-4.300-4.800-4.900 3.100-.6 4.100-1.600 4.800-4.900z" fill="#7a4fd0"/></svg>
<span class="t" style="left:1815.80px;top:29.00px;font-size:18.2px;color:#424242;transform:scaleX(0.9800);-webkit-text-stroke:0.75px #424242;">Ask AI</span>
<svg class="b" style="left:1904px;top:24px;" width="30" height="29" viewBox="0 0 30 29"><g fill="none" stroke="#525252" stroke-width="2.200" stroke-linejoin="round" stroke-linecap="round"><path d="M10.100 9.300H5.400a3 3 0 0 0-3 3v1.900a3 3 0 0 0 3 3h4.700z"/><path d="M10.100 9.300C15 8.600 19 6.500 22.800 3.400M10.100 17.200c4.900.8 8.900 3.300 12.700 7.300"/><path d="M23 1.900v24"/><path d="M23.800 10.600a3.700 3.700 0 0 1 0 7.400"/><path d="M5.800 17.800L4.100 23.600a1.200 1.200 0 0 0 1.200 1.500h2.300a1.200 1.200 0 0 0 1.200-.9l1.800-6.400"/></g></svg>
<svg class="b" style="left:1955px;top:24px;" width="28" height="30" viewBox="0 0 28 30"><g fill="none" stroke="#525252" stroke-width="2.300" stroke-linejoin="round" stroke-linecap="round"><path d="M5.700 18v-4.800a7.800 7.800 0 0 1 15.600 0V18c0 2.500 1.200 3.600 3.100 5.300H2.600c1.900-1.700 3.100-2.800 3.100-5.300z"/></g><circle cx="13.500" cy="3.600" r="2.300" fill="#525252"/><path d="M10.700 24.600h5.600a2.800 3.200 0 0 1-5.600 0z" fill="#525252"/></svg>
<div class="b" style="left:2004px;top:22px;width:33.3px;height:33px;background:#b4ded0;border-radius:50%;"></div>
<span class="t" style="left:2010.30px;top:30.00px;font-size:18.5px;color:#1f8e68;transform:scaleX(0.8047);-webkit-text-stroke:0.3px #1f8e68;">CR</span>
<div class="b" style="left:2060px;top:0px;width:20px;height:1083px;background:#faf8f8;border-left:1px solid #e9e9e9;"></div>
<div class="b" style="left:2065px;top:4px;width:11px;height:1037px;background:#c1c1c1;border-radius:6px;"></div>
<div class="b" style="left:0px;top:0px;width:2080px;height:1083px;border-radius:0 0 17px 17px;box-shadow:0 0 0 40px #0a0a0a;pointer-events:none;"></div>
</div></body></html>
